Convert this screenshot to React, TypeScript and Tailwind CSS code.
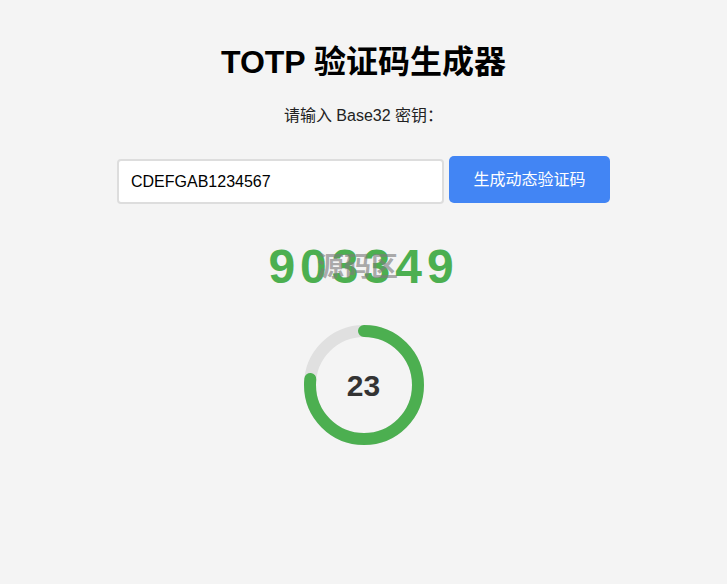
import React from "react";

export default function App() {
  const r = 54;
  const circ = 2 * Math.PI * r;
  const remaining = 23;
  const offset = circ * (1 - remaining / 30);
  return (
    <div className="min-h-[584px] w-full bg-[#f4f4f4] flex flex-col items-center font-['Liberation_Sans','Noto_Sans_CJK_SC',sans-serif]">
      <h1 className="mt-[42px] h-[40px] leading-[40px] text-[32px] font-bold text-black whitespace-nowrap">
        TOTP 验证码生成器
      </h1>
      <p className="mt-[24px] h-[20px] leading-[20px] text-[16px] text-[#222] whitespace-nowrap">
        请输入 Base32 密钥：
      </p>
      <div className="mt-[30px] flex items-start gap-[5px]">
        <input
          readOnly
          value="CDEFGAB1234567"
          className="mt-[3px] w-[327px] h-[45px] border-2 border-[#ddd] rounded-[4px] bg-white px-[12px] text-[16px] text-black outline-none font-['Liberation_Sans',sans-serif]"
        />
        <button className="w-[161px] h-[47px] bg-[#4285f4] text-white rounded-[5px] text-[16px] leading-[20px] font-['Liberation_Sans','Noto_Sans_CJK_SC',sans-serif]">
          生成动态验证码
        </button>
      </div>
      <div className="relative mt-[35px] h-[56px]">
        <div className="h-[56px] leading-[56px] text-[48px] font-bold text-[#4caf50] tracking-[5px] whitespace-nowrap">
          903349
        </div>
        <div className="absolute inset-0 flex items-center justify-center">
          <span className="mr-[12px] text-[27px] leading-[30px] font-bold text-[rgba(125,125,125,0.65)] whitespace-nowrap">
            源码区
          </span>
        </div>
      </div>
      <div className="relative mt-[30px] w-[120px] h-[120px]">
        <svg width="120" height="120" viewBox="0 0 120 120">
          <circle cx="60" cy="60" r={r} fill="none" stroke="#e0e0e0" strokeWidth="12" />
          <circle
            cx="60"
            cy="60"
            r={r}
            fill="none"
            stroke="#4caf50"
            strokeWidth="12"
            strokeLinecap="round"
            strokeDasharray={circ}
            strokeDashoffset={offset}
            transform="rotate(-90 60 60)"
          />
        </svg>
        <div className="absolute inset-0 flex items-center justify-center text-[30px] font-bold text-[#333]">
          23
        </div>
      </div>
    </div>
  );
}
